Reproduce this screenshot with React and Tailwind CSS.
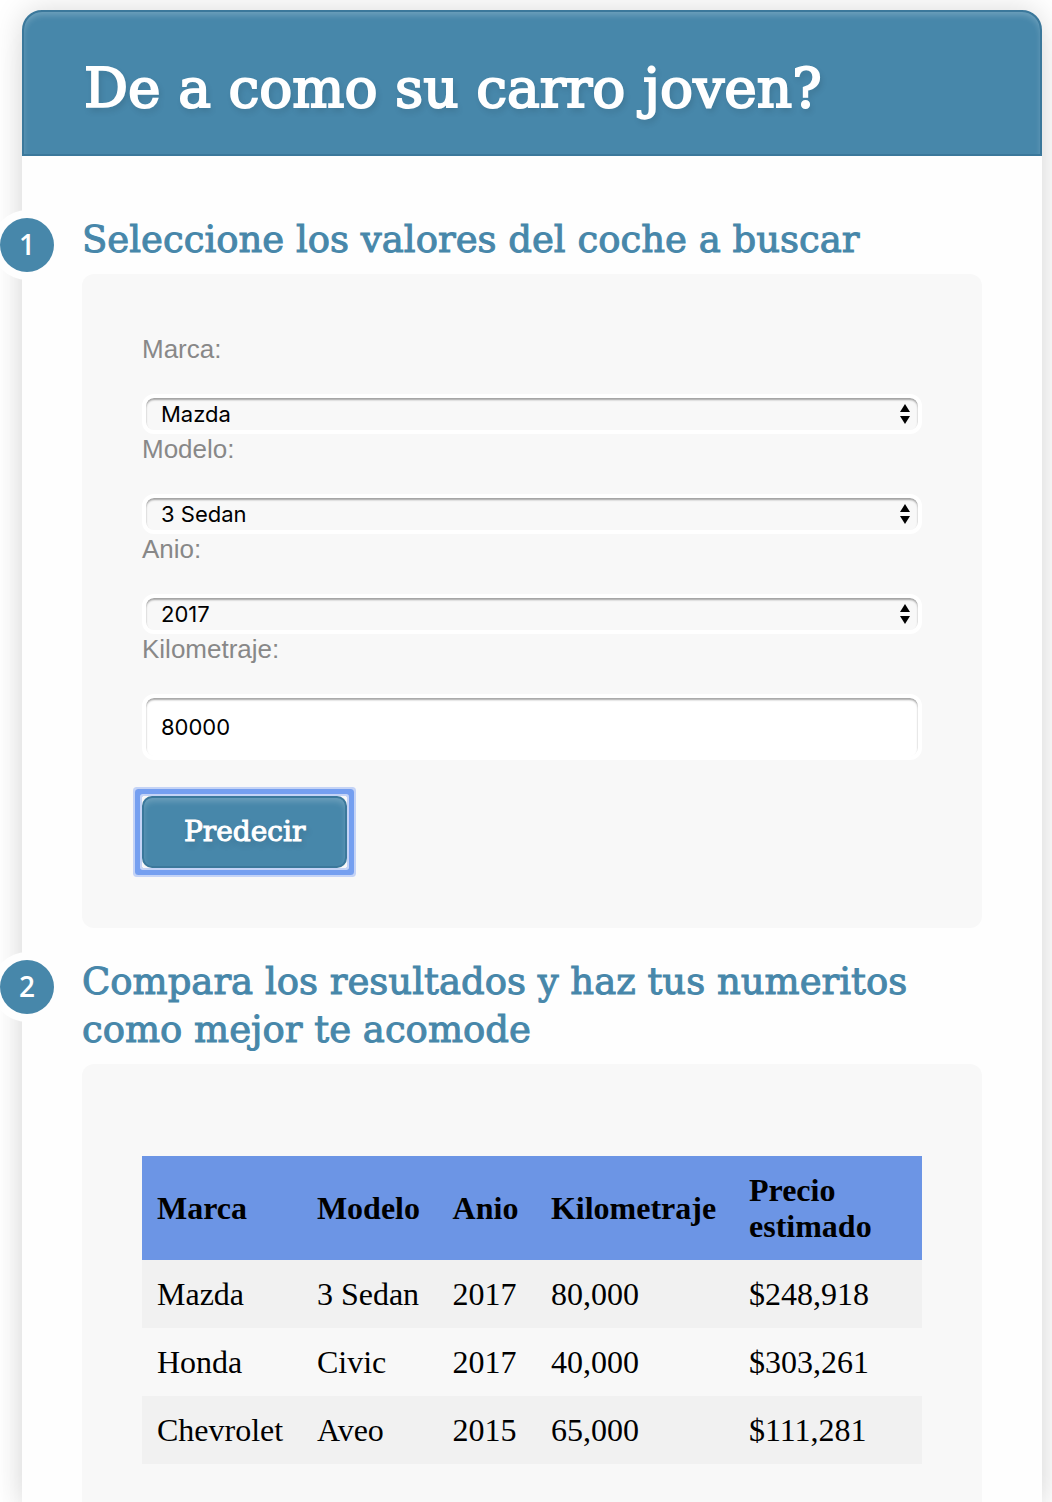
import { useId } from "react";

const FIELD =
  "block w-full appearance-none rounded-xl border-4 border-white px-[15px] font-['Inter',sans-serif] text-[22px] text-black shadow-[inset_0_2px_2px_rgba(0,0,0,0.35)] outline-none";

function Step({ number, title, className, children }) {
  return (
    <section className="relative">
      <span className="absolute top-0.5 -left-[82px] flex size-[54px] items-center justify-center rounded-full bg-[#4787aa] pb-0.5 font-['Open_Sans',sans-serif] text-[28px] font-semibold text-white ring-8 ring-[#fefefe]">
        {number}
      </span>
      <h2 className="mb-2.5 font-['DejaVu_Serif',serif] text-[37px] leading-[48px] text-[#4787aa] [-webkit-text-stroke:1px]">
        {title}
      </h2>
      <div className={"bg-[#f8f8f8] px-[60px] " + className}>{children}</div>
    </section>
  );
}

function Label({ htmlFor, children }) {
  return (
    <label
      htmlFor={htmlFor}
      className="mb-[30px] block font-['Liberation_Sans',sans-serif] text-[26px] leading-[30px] text-[#888]"
    >
      {children}
    </label>
  );
}

function SelectField({ label, options }) {
  const id = useId();
  return (
    <div>
      <Label htmlFor={id}>{label}</Label>
      <div className="relative">
        <select id={id} className={FIELD + " h-10 bg-[#f8f8f8] leading-8"}>
          {options.map((o) => (
            <option key={o}>{o}</option>
          ))}
        </select>
        <svg
          className="pointer-events-none absolute top-2.5 right-3 h-5 w-2.5"
          viewBox="0 0 10 20"
          aria-hidden="true"
        >
          <path d="M5 0 10 8H0ZM0 12h10L5 20Z" fill="#000" />
        </svg>
      </div>
    </div>
  );
}

const ROWS = [
  ["Mazda", "3 Sedan", "2017", "80,000", "$248,918"],
  ["Honda", "Civic", "2017", "40,000", "$303,261"],
  ["Chevrolet", "Aveo", "2015", "65,000", "$111,281"],
];

export default function App() {
  return (
    <div className="overflow-hidden bg-white pt-2.5 pr-2.5 pl-[22px]">
      <main className="rounded-t-[20px] bg-[#fefefe] shadow-[0_0_30px_rgba(0,0,0,0.15),0_30px_30px_rgba(0,0,0,0.04)]">
        <header className="rounded-t-[20px] border-2 border-[#3b789b] bg-[#4787aa] px-[60px] pt-10 pb-[30px] shadow-[inset_0_4px_6px_-1px_rgba(255,255,255,0.22)]">
          <h1 className="font-['DejaVu_Serif',serif] text-[55px] leading-[72px] text-white [-webkit-text-stroke:2px] [text-shadow:2px_4px_6px_rgba(0,0,0,0.15)]">
            De a como su carro joven?
          </h1>
        </header>
        <div className="flex flex-col gap-[30px] px-[60px] pt-[60px]">
          <Step
            number="1"
            title="Seleccione los valores del coche a buscar"
            className="rounded-xl py-[60px]"
          >
            <form onSubmit={(e) => e.preventDefault()}>
              <SelectField label="Marca:" options={["Mazda", "Honda", "Chevrolet"]} />
              <SelectField label="Modelo:" options={["3 Sedan", "Civic", "Aveo"]} />
              <SelectField label="Anio:" options={["2017", "2016", "2015"]} />
              <Label htmlFor="kilometraje">Kilometraje:</Label>
              <input
                id="kilometraje"
                type="text"
                defaultValue="80000"
                className={FIELD + " h-[66px] bg-white"}
              />
              <div className="mt-9 w-fit rounded-[1px] shadow-[0_0_0_2px_#c4d3f6,0_0_0_7px_#759ff0,0_0_0_9px_#c4d3f6]">
                <button
                  type="submit"
                  className="block h-[72px] rounded-[10px] border-2 border-[#3b789b] bg-[#4787aa] px-10 font-['DejaVu_Serif',serif] text-[28px] text-white shadow-[inset_0_4px_6px_-1px_rgba(255,255,255,0.22)] outline-none [-webkit-text-stroke:1px] [text-shadow:2px_4px_6px_rgba(0,0,0,0.15)]"
                >
                  Predecir
                </button>
              </div>
            </form>
          </Step>
          <Step
            number="2"
            title="Compara los resultados y haz tus numeritos como mejor te acomode"
            className="rounded-t-xl pt-[92px] pb-[38px]"
          >
            <table className="w-full table-fixed border-collapse text-left font-['Liberation_Serif',serif] text-[32px] leading-9 text-black">
              <colgroup>
                <col className="w-[20.5%]" />
                <col className="w-[17.4%]" />
                <col className="w-[12.6%]" />
                <col className="w-[25.4%]" />
                <col />
              </colgroup>
              <thead className="bg-[#6c95e5]">
                <tr>
                  {["Marca", "Modelo", "Anio", "Kilometraje", "Precio estimado"].map((h) => (
                    <th key={h} className="py-4 pl-[15px] font-bold">
                      {h}
                    </th>
                  ))}
                </tr>
              </thead>
              <tbody>
                {ROWS.map((r) => (
                  <tr key={r[0]} className="odd:bg-[#f1f1f1]">
                    {r.map((c, i) => (
                      <td key={i} className="py-4 pl-[15px]">
                        {c}
                      </td>
                    ))}
                  </tr>
                ))}
              </tbody>
            </table>
          </Step>
        </div>
      </main>
    </div>
  );
}
